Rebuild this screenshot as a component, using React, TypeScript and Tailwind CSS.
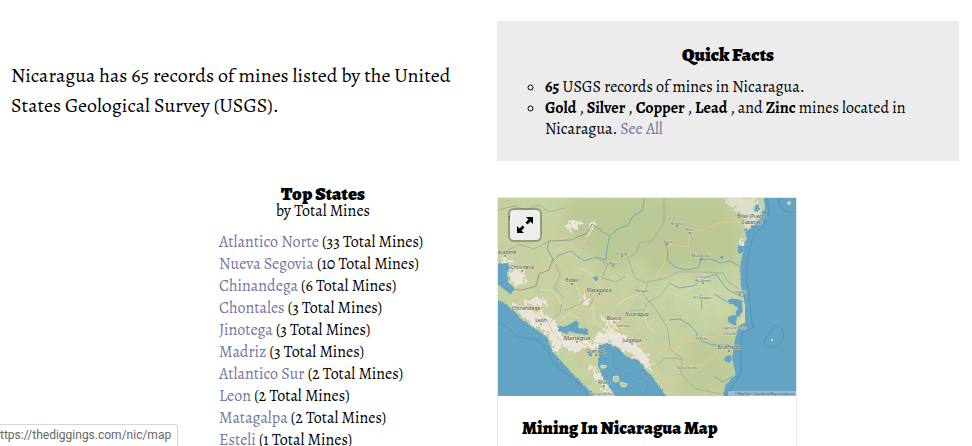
import React from "react";

const states = [
  { name: "Atlantico Norte", total: 33 },
  { name: "Nueva Segovia", total: 10 },
  { name: "Chinandega", total: 6 },
  { name: "Chontales", total: 3 },
  { name: "Jinotega", total: 3 },
  { name: "Madriz", total: 3 },
  { name: "Atlantico Sur", total: 2 },
  { name: "Leon", total: 2 },
  { name: "Matagalpa", total: 2 },
  { name: "Esteli", total: 1 },
];

const labels = [
  { x: 24, y: 71, t: "Choluteca", s: 5 },
  { x: 74, y: 84, t: "Estelí", s: 5 },
  { x: 101, y: 94, t: "Matagalpa", s: 5 },
  { x: 7, y: 56, t: "Nacaome", s: 5 },
  { x: 28, y: 112, t: "Chinandega", s: 5 },
  { x: 43, y: 124, t: "León", s: 5 },
  { x: 116, y: 122, t: "Boaco", s: 5 },
  { x: 125, y: 129, t: "Camoapa", s: 3 },
  { x: 134, y: 144, t: "Juigalpa", s: 5 },
  { x: 79, y: 142, t: "Managua", s: 6 },
  { x: 98, y: 155, t: "Granada", s: 5 },
  { x: 106, y: 186, t: "Rivas", s: 5 },
  { x: 103, y: 197, t: "San Juan del Sur", s: 3 },
  { x: 254, y: 20, t: "Bilwi (Puerto", s: 5 },
  { x: 254, y: 26, t: "Cabezas)", s: 5 },
  { x: 179, y: 27, t: "Bonanza", s: 3 },
  { x: 192, y: 33, t: "Rosita", s: 3 },
  { x: 170, y: 45, t: "Siuna", s: 3 },
  { x: 203, y: 59, t: "Mulukukú", s: 4 },
  { x: 205, y: 80, t: "La Cruz de", s: 3 },
  { x: 205, y: 84, t: "Río Grande", s: 3 },
  { x: 242, y: 95, t: "Karawala", s: 3 },
  { x: 205, y: 101, t: "El Tortuguero", s: 3 },
  { x: 236, y: 131, t: "Laguna de Perlas", s: 3 },
  { x: 232, y: 137, t: "Kukra Hill", s: 3 },
  { x: 204, y: 142, t: "El Rama", s: 3 },
  { x: 231, y: 151, t: "Bluefields", s: 5 },
  { x: 189, y: 171, t: "Nueva Guinea", s: 3 },
  { x: 124, y: 57, t: "Jinotega", s: 3 },
  { x: 115, y: 67, t: "Wiwilí", s: 3 },
  { x: 144, y: 94, t: "Matiguás", s: 3 },
];

function NicaraguaMap() {
  return (
    <svg
      viewBox="0 0 298 198"
      className="block w-full"
      role="img"
      aria-label="Map of Nicaragua"
    >
      <defs>
        <filter id="relief" x="0" y="0" width="100%" height="100%">
          <feTurbulence type="fractalNoise" baseFrequency="0.09" numOctaves="4" seed="8" />
          <feColorMatrix values="0 0 0 0 0.5  0 0 0 0 0.58  0 0 0 0 0.36  2.4 0 0 0 -1" />
        </filter>
        <filter id="soft" x="-20%" y="-20%" width="140%" height="140%">
          <feGaussianBlur stdDeviation="7" />
        </filter>
        <filter id="ragged" x="-10%" y="-10%" width="120%" height="120%">
          <feTurbulence type="fractalNoise" baseFrequency="0.22" numOctaves="3" seed="3" />
          <feDisplacementMap in="SourceGraphic" scale="14" xChannelSelector="R" yChannelSelector="G" />
        </filter>
        <filter id="coast" x="-5%" y="-5%" width="110%" height="110%">
          <feTurbulence type="fractalNoise" baseFrequency="0.3" numOctaves="2" seed="5" />
          <feDisplacementMap in="SourceGraphic" scale="3" xChannelSelector="R" yChannelSelector="G" />
        </filter>
      </defs>
      <rect width="298" height="198" fill="#c6d2a0" />
      <g filter="url(#soft)">
        <path
          d="M72 0H226L230 15L243 35L242 62L215 72L176 70L154 83L145 55L118 74L86 52L65 26Z"
          fill="#bac893"
        />
        <path d="M166 78L226 82L242 105L232 122L195 116L164 97Z" fill="#cbd8a5" />
        <path d="M190 140L240 130L240 190L180 198Z" fill="#bfcb96" />
      </g>
      <rect width="298" height="198" filter="url(#relief)" opacity="0.5" />

      <g fill="#e9e5dc" filter="url(#ragged)">
        <path d="M224 0H258L263 10L256 29L249 33L246 18L236 9Z" opacity="0.7" />
        <path d="M68 28L73 22L84 23L80 28L75 34L69 32Z" />
        <path d="M87 40L92 27L97 24L95 32Z" />
        <path d="M10 74L22 69L28 76L26 86L18 91L11 82Z" />
        <path d="M14 106L28 109L43 114L56 121L61 135L69 138L86 141L99 148L101 155L90 149L79 155L65 148L60 157L54 147L50 135L28 122Z" />
        <path d="M99 136L113 130L129 139L142 149L151 160L153 174L138 161L120 148L109 144L101 148L95 143Z" />
        <path d="M84 96L92 98L92 108L85 106Z" />
        <path d="M102 118L118 122L122 130L108 128Z" />
        <path d="M24 102L46 100L48 106L32 108Z" />
        <path d="M90 164L100 172L106 184L116 196L106 192L98 180Z" />
        <path d="M248 38L246 51L239 56L242 45Z" />
        <path d="M4 62L14 60L17 65L8 68Z" />
      </g>

      <g fill="none" stroke="#edc589" strokeWidth="1">
        <path d="M0 43L10 32L24 26L42 26L57 29L62 36L63 49L67 58L65 66L53 67L38 73L26 76L15 69L6 66" />
        <path d="M67 54L81 51L91 39L94 26M70 61L74 72L76 84L88 96L92 106L86 116L82 124" />
        <path d="M17 96L26 108L39 115L49 122L54 133L62 142L78 142L90 148L99 157L104 171L112 188L119 198" />
        <path d="M76 85L94 98L101 109L109 116L112 129L125 134L141 143L155 150L173 153L183 147L200 141L228 136" />
        <path d="M173 153L179 163L189 171L206 166L218 155L233 149M245 22L221 25L205 31L192 34L190 49L169 46L167 64L155 84L141 96L120 106L101 100" />
        <path d="M38 115L49 105L64 105L78 113L91 109L101 110M125 134L119 125L112 128M142 144L147 156L157 167L165 180L166 198" />
        <path d="M19 91L38 88L48 84M88 96L105 94M91 149L80 159L94 166L99 176" />
      </g>
      <g fill="none" stroke="#e7ddba" strokeWidth="0.8">
        <path d="M29 115L38 102L52 101M42 91L56 94L66 109M75 112L84 102L78 88M62 124L70 115L83 121M95 108L96 123L107 133" />
        <path d="M83 70L93 76L99 87M58 77L67 87M117 109L127 101L140 96M158 136L150 129L145 115" />
      </g>

      <g fill="none" stroke="#979d90" strokeWidth="0.6">
        <path d="M0 12L16 8L28 12L42 7L51 14L67 10M10 52L21 46L36 51L51 43" />
        <path d="M111 38L105 34L94 26L89 35L73 42L51 43L49 51L55 61L51 72L41 76L38 88L24 92L11 91" strokeWidth="1" />
        <path d="M166 0L166 25L154 43L142 45L137 56L130 60L137 80L150 86" />
        <path d="M149 84L169 80L179 74L204 74L225 75L230 84L241 91M150 86L145 96L159 113L170 131L172 151L184 161L183 176L198 191L224 196" />
        <path d="M183 161L167 160L157 169M66 113L82 106L91 99L98 91M52 124L62 115L64 105M91 110L96 99" />
        <path d="M58 66L62 78L56 90L66 100M98 60L110 66L104 80L118 84L128 78" />
      </g>

      <g fill="none" stroke="#67a9bd" strokeWidth="0.9">
        <path d="M146 0L145 12L134 19L130 27L120 31L112 37L109 50L108 62L98 59L86 63L79 58L73 53L61 57L54 64" />
        <path d="M166 43L170 53L169 62L177 69L188 72L200 70L203 61L213 61L222 65L233 63L242 69" />
        <path d="M171 85L181 90L195 88L207 80L218 76L228 90L234 94L245 99M171 122L182 121L192 127L198 134L201 142L215 147L232 147" />
        <path d="M203 96L204 112M216 178L225 184L235 178M216 96L229 104L242 103" />
        <path d="M171 86L162 98L150 104L146 112L130 113" opacity="0.5" />
      </g>

      <g fill="#64a4c4" filter="url(#coast)">
        <path d="M265 -9L267 10L260 23L249 33L246 48L242 68L243 88L246 101L247 123L240 129L236 146L234 161L238 176L227 188L224 208H310V-9Z" />
        <path d="M-9 96L12 109L24 121L49 139L55 154L72 173L104 204H-9Z" />
        <path d="M-9 66L10 65L12 70L9 74L10 84L17 91L12 96L-9 79Z" />
        <path d="M60 128L69 128L78 122L81 125L80 130L90 131L90 137L77 135L71 133L69 136L60 133Z" />
        <path d="M101 148L109 145L119 149L129 159L139 161L152 176L160 187L173 205H122L107 183L100 168Z" />
        <path d="M257 7L262 6L260 14L256 13ZM240 47L246 48L245 54L240 55ZM245 31L250 30L248 35ZM230 119L238 117L240 110L231 105L231 101L239 101L245 103L246 113L239 119L238 128L230 124ZM228 158L233 157L233 165L227 163ZM222 58L226 58L225 61L222 60ZM95 80L101 77L98 84Z" />
        <circle cx="92" cy="156" r="2" />
      </g>

      <path d="M244 104L247 106L247 125L240 127L245 116Z" fill="#d2dba8" />
      <g fill="#bdc991" stroke="#e0dfb9">
        <circle cx="118" cy="181" r="3" />
        <path d="M122 184L129 186L127 189L123 188Z" />
        <path d="M103 167L109 168L107 170H103Z" />
      </g>

      <g fill="none" stroke="#4d91b3" strokeWidth="0.8">
        <path d="M269 0L271 15L264 29L255 39L250 58L248 79L251 98L253 117L255 130L244 135L243 151L243 174L238 184L230 194L228 198" />
        <path d="M0 123L10 130L20 139L40 142L49 152L56 166L67 175L82 186L91 198" />
        <path d="M281 0L282 9L289 14L297 14M266 143L271 136L277 127L284 131L286 139L281 147L273 150L267 147Z" />
        <path d="M108 151L116 154L116 170L150 184L147 198" opacity="0.5" />
      </g>
      <circle cx="274" cy="142" r="1" fill="#e7edcf" />
      <circle cx="291" cy="5" r="2" fill="#cdd7a5" />

      <g
        textAnchor="middle"
        fill="#3d4444"
        stroke="#eef0df"
        strokeWidth="0.5"
        paintOrder="stroke"
        fontFamily="Noto Sans, sans-serif"
      >
        {labels.map((l) => (
          <text key={l.t} x={l.x} y={l.y} fontSize={l.s}>
            {l.t}
          </text>
        ))}
        <text x="139" y="118" fontSize="5" fontStyle="italic">
          Nicaragua
        </text>
        <text x="10" y="22" fontSize="5" textAnchor="start">
          T
        </text>
      </g>
      <g fill="#30383a">
        {[[24, 73], [74, 86], [101, 96], [43, 126], [79, 144], [98, 157], [106, 188], [179, 28], [192, 35], [169, 46], [231, 153], [116, 124], [134, 146], [203, 61], [205, 85], [242, 96], [124, 58], [115, 68], [7, 58], [254, 28]].map(
          ([x, y]) => <circle key={x + "-" + y} cx={x} cy={y} r="0.7" />
        )}
      </g>
      <rect x="230" y="193" width="68" height="5" fill="#bad4de" opacity="0.6" />
      <text x="297" y="197" textAnchor="end" fontSize="3" fontFamily="Noto Sans, sans-serif" fill="#415761">
        © MapTiler © OpenStreetMap contributors
      </text>
    </svg>
  );
}

function StateLink({ children }: { children: React.ReactNode }) {
  return (
    <a href="#" className="text-[#7675a0] no-underline">
      {children}
    </a>
  );
}

export default function App() {
  return (
    <div className="relative h-screen overflow-hidden bg-white font-['Alegreya','Liberation_Serif',serif] text-black">
      <main className="pt-[21px] pr-[13px] pl-[11px]">
        <section className="grid grid-cols-2 items-center gap-6">
          <p className="text-[20px] leading-[30px]">
            Nicaragua has 65 records of mines listed by the United States
            Geological Survey (USGS).
          </p>
          <div className="bg-[#ececec] px-6 pt-5 pb-[21px]">
            <h2 className="mb-2 text-center text-[19px] leading-7 font-black">
              Quick Facts
            </h2>
            <ul className="list-[circle] pl-6 text-[16px] leading-[21px]">
              <li>
                <b>65</b> USGS records of mines in Nicaragua.
              </li>
              <li>
                <b>Gold</b> , <b>Silver</b> , <b>Copper</b> , <b>Lead</b> , and{" "}
                <b>Zinc</b> mines located in Nicaragua.{" "}
                <StateLink>See All</StateLink>
              </li>
            </ul>
          </div>
        </section>

        <section className="mt-6 flex items-start justify-center gap-6">
          <div className="w-[300px]">
            <h2 className="text-center text-[19px] leading-[18px] font-black">
              Top States
            </h2>
            <p className="text-center text-[16px] leading-4">by Total Mines</p>
            <ul className="mx-auto mt-3 w-52 text-[16px] leading-[22px] whitespace-nowrap">
              {states.map((s) => (
                <li key={s.name}>
                  <StateLink>{s.name}</StateLink> ({s.total} Total Mines)
                </li>
              ))}
            </ul>
          </div>

          <article className="mt-3 w-[300px] border border-[#e8e8e8]">
            <div className="relative">
              <NicaraguaMap />
              <button
                type="button"
                aria-label="Expand map"
                className="absolute top-3 left-3 flex size-[30px] items-center justify-center rounded-sm bg-[#eeeeee] shadow-[0_0_0_2px_rgba(0,0,0,0.25)]"
              >
                <svg viewBox="0 0 18 18" className="size-[18px]" aria-hidden="true">
                  <path
                    d="M10 1H17V8L14.5 5.5L11.5 8.5L9.5 6.5L12.5 3.5ZM8 17H1V10L3.5 12.5L6.5 9.5L8.5 11.5L5.5 14.5Z"
                    fill="#000"
                  />
                </svg>
              </button>
            </div>
            <div className="p-6">
              <h2 className="text-[18px] leading-4 font-black">
                Mining In Nicaragua Map
              </h2>
            </div>
          </article>
        </section>
      </main>

      <div className="absolute bottom-0 left-0 rounded-tr border-t border-r border-[#d6d6d6] bg-white pr-1.5 font-[Roboto,sans-serif] text-[12px] leading-[21px] text-[#666666]">
        ttps://thediggings.com/nic/map
      </div>
    </div>
  );
}
